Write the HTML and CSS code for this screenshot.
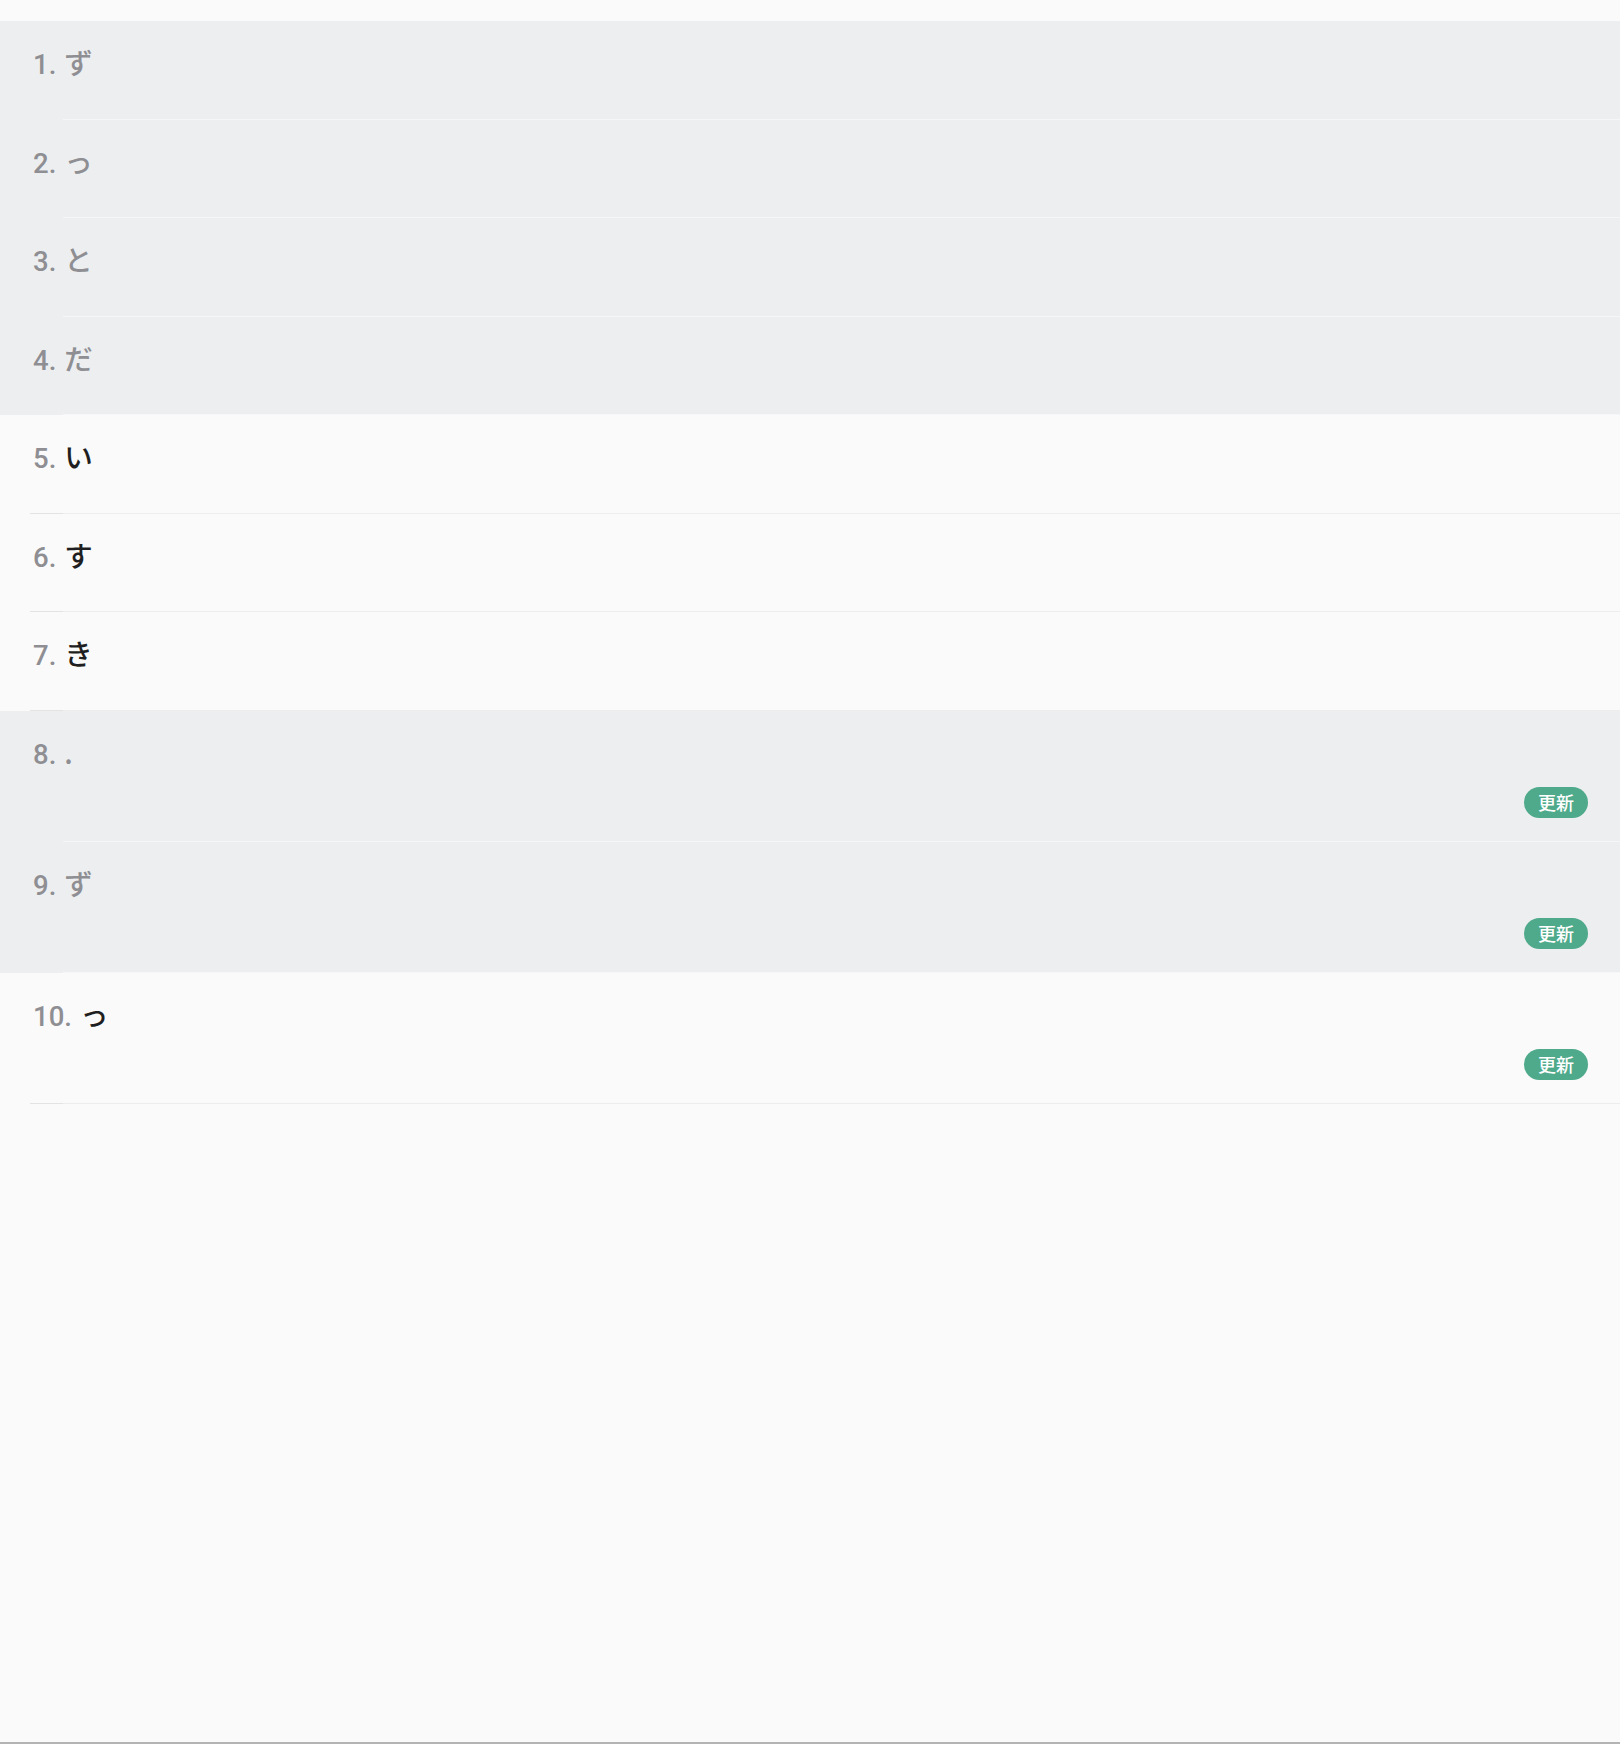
FILE: index.html
```html
<!DOCTYPE html>
<html lang="ja">
<head>
<meta charset="utf-8">
<title>List</title>
<link rel="stylesheet" href="styles.css">
</head>
<body>
<div class="page">
  <ol class="list">
    <li class="row row--muted"><div class="row__inner"><div class="row__title"><span class="num">1.</span><span class="word">ず</span></div></div></li>
    <li class="row row--muted"><div class="row__inner"><div class="row__title"><span class="num">2.</span><span class="word">っ</span></div></div></li>
    <li class="row row--muted"><div class="row__inner"><div class="row__title"><span class="num">3.</span><span class="word">と</span></div></div></li>
    <li class="row row--muted"><div class="row__inner"><div class="row__title"><span class="num">4.</span><span class="word">だ</span></div></div></li>
    <li class="row"><div class="row__inner"><div class="row__title"><span class="num">5.</span><span class="word">い</span></div></div></li>
    <li class="row"><div class="row__inner"><div class="row__title"><span class="num">6.</span><span class="word">す</span></div></div></li>
    <li class="row"><div class="row__inner"><div class="row__title"><span class="num">7.</span><span class="word">き</span></div></div></li>
    <li class="row row--muted row--tall"><div class="row__inner"><div class="row__title"><span class="num">8.</span><span class="word">.</span></div><span class="badge">更新</span></div></li>
    <li class="row row--muted row--tall"><div class="row__inner"><div class="row__title"><span class="num">9.</span><span class="word">ず</span></div><span class="badge">更新</span></div></li>
    <li class="row row--tall"><div class="row__inner"><div class="row__title"><span class="num">10.</span><span class="word">っ</span></div><span class="badge">更新</span></div></li>
  </ol>
</div>
</body>
</html>
```

FILE: styles.css
```css
* { box-sizing: border-box; }
html, body { margin: 0; padding: 0; }
body {
  background: #fafafa;
  font-family: Roboto, "Noto Sans CJK JP", sans-serif;
}
.page {
  min-height: 1744px;
  padding-top: 21px;
  border-bottom: 2px solid #b4b4b4;
}
.list {
  list-style: none;
  margin: 0;
  padding: 0;
}
.row {
  height: 98.57px;
  background: #fafafa;
}
.row--muted { background: #edeef0; }
.row--tall { height: 131px; }
.row__inner {
  height: 100%;
  margin-left: 30px;
  padding: 23px 32px 23px 3px;
  display: flex;
  flex-direction: column;
  border-bottom: 1px solid #ececec;
  border-image: linear-gradient(to right, #e3e3e3 34px, #ededed 34px) 1;
}
.row--muted .row__inner {
  border-image: linear-gradient(to right, transparent 34px, #f6f6f8 34px) 1;
}
.row__title {
  display: flex;
  align-items: baseline;
  gap: 8px;
  font-size: 27.5px;
  line-height: 36px;
  font-weight: 500;
}
.num { color: #8e8e93; }
.word {
  font-family: "Noto Sans CJK JP", sans-serif;
  font-size: 28.5px;
  color: #1f1f21;
}
.row--muted .word { color: #8e8e93; }
.badge {
  margin-top: auto;
  align-self: flex-end;
  height: 31px;
  padding: 0 14px;
  border-radius: 16px;
  background: #4faa8b;
  color: #fff;
  font-family: "Noto Sans CJK JP", sans-serif;
  font-size: 18px;
  font-weight: 500;
  line-height: 31px;
}
```
